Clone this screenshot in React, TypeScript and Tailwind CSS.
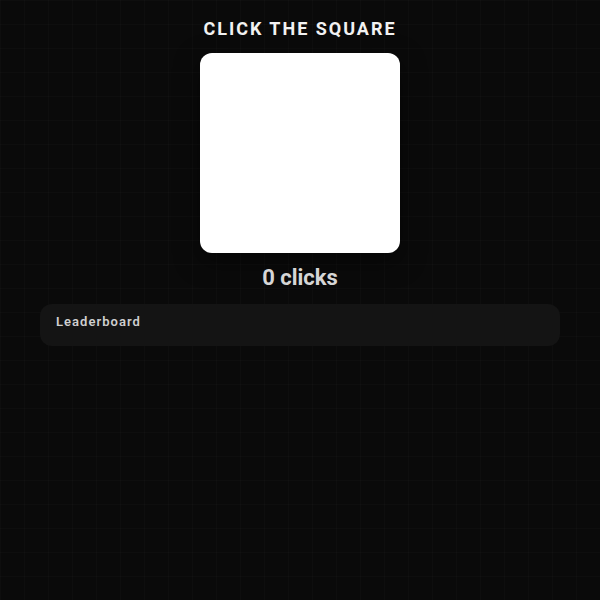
import { useState } from 'react';

export default function App() {
  const [clicks, setClicks] = useState(0);

  return (
    <div
      className="min-h-screen w-full bg-[#0a0a0a] bg-[linear-gradient(rgba(255,255,255,0.015)_1px,transparent_1px),linear-gradient(90deg,rgba(255,255,255,0.015)_1px,transparent_1px)] bg-[size:24px_24px] font-['Roboto',sans-serif]"
    >
      <div className="flex flex-col items-center pt-[17px] px-10">
        <h1 className="text-[18px] leading-6 font-bold tracking-[0.11em] text-[#f2f2f2] uppercase">
          Click the square
        </h1>
        <button
          onClick={() => setClicks((c) => c + 1)}
          className="mt-3 w-[200px] h-[200px] rounded-xl bg-white shadow-[0_8px_24px_rgba(0,0,0,0.5)]"
        />
        <div className="mt-[11px] text-[22px] leading-7 font-bold text-[#d6d6d6]">
          {clicks} clicks
        </div>
        <div className="mt-3 w-full rounded-xl bg-[#141414] px-4 pt-[11px] pb-[17px]">
          <h2 className="text-[13px] leading-[14px] font-semibold tracking-[0.08em] text-[#cfcfcf]">
            Leaderboard
          </h2>
        </div>
      </div>
    </div>
  );
}
